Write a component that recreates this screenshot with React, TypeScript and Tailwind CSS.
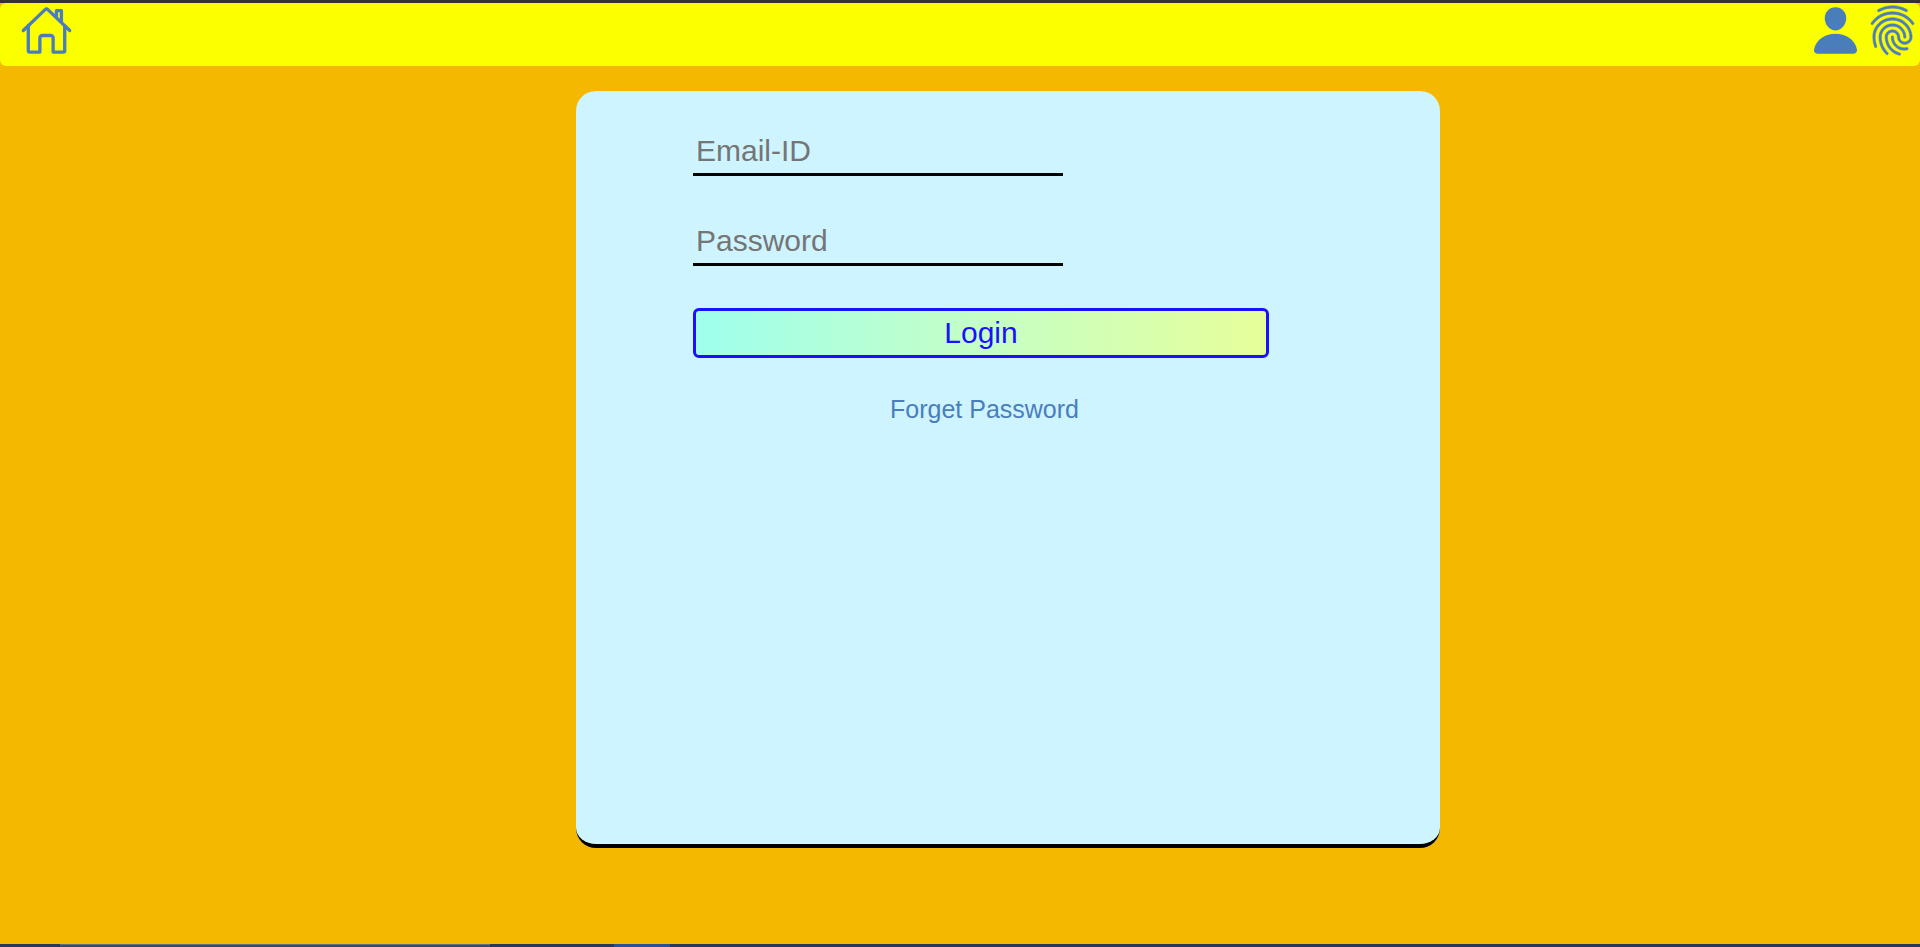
import { useState } from "react";
import { IoFingerPrintOutline, IoHomeOutline, IoPerson } from "react-icons/io5";

const field =
  "block h-[45px] w-[370px] rounded-none border-b-3 border-black bg-transparent px-[3px] pb-0.5 text-[30px] leading-9 text-black outline-none placeholder:text-[#757575]";

export default function App() {
  const [email, setEmail] = useState("");
  const [password, setPassword] = useState("");

  return (
    <div className="flex min-h-screen flex-col bg-[#f4b800] font-['Liberation_Sans',Arial,sans-serif]">
      <div className="h-[3px] bg-[#323338]" />
      <header className="flex h-[63px] items-start justify-between rounded-md bg-[#fcff00] pt-px pr-px pl-5 text-[#4a7ebb]">
        <a href="#home" aria-label="Home">
          <IoHomeOutline size={53} />
        </a>
        <nav className="flex gap-1">
          <a href="#account" aria-label="Account">
            <IoPerson size={53} />
          </a>
          <a href="#sign-in" aria-label="Fingerprint sign in">
            <IoFingerPrintOutline size={53} strokeWidth={5} />
          </a>
        </nav>
      </header>

      <main className="flex-1 pb-24">
        <form
          onSubmit={(event) => event.preventDefault()}
          className="mt-[25px] ml-[30%] flex min-h-[757px] w-[45%] flex-col rounded-[20px] border-b-4 border-black bg-[#cdf4ff] pt-10 pr-[171px] pl-[117px]"
        >
          <input
            className={field}
            type="email"
            aria-label="Email-ID"
            placeholder="Email-ID"
            value={email}
            onChange={(event) => setEmail(event.target.value)}
          />
          <input
            className={`${field} mt-[45px]`}
            type="password"
            aria-label="Password"
            placeholder="Password"
            value={password}
            onChange={(event) => setPassword(event.target.value)}
          />
          <button
            type="submit"
            className="mt-[42px] h-[50px] w-full rounded-md border-3 border-[#1a10ff] bg-linear-to-r from-[#9effec] to-[#e6ff99] text-[30px] leading-9 text-[#1a10ff]"
          >
            Login
          </button>
          <a href="#forget-password" className="mt-9 ml-[7px] self-center text-[25px] leading-[30px] text-[#4a7ebb]">
            Forget Password
          </a>
        </form>
      </main>

      <footer className="flex h-[3px] bg-[#28375c]">
        <div className="ml-[60px] w-[430px] border-t border-[#5f6f80] bg-[#3a4a68]" />
        <div className="ml-[124px] w-14 bg-[#2a509a]" />
      </footer>
    </div>
  );
}
